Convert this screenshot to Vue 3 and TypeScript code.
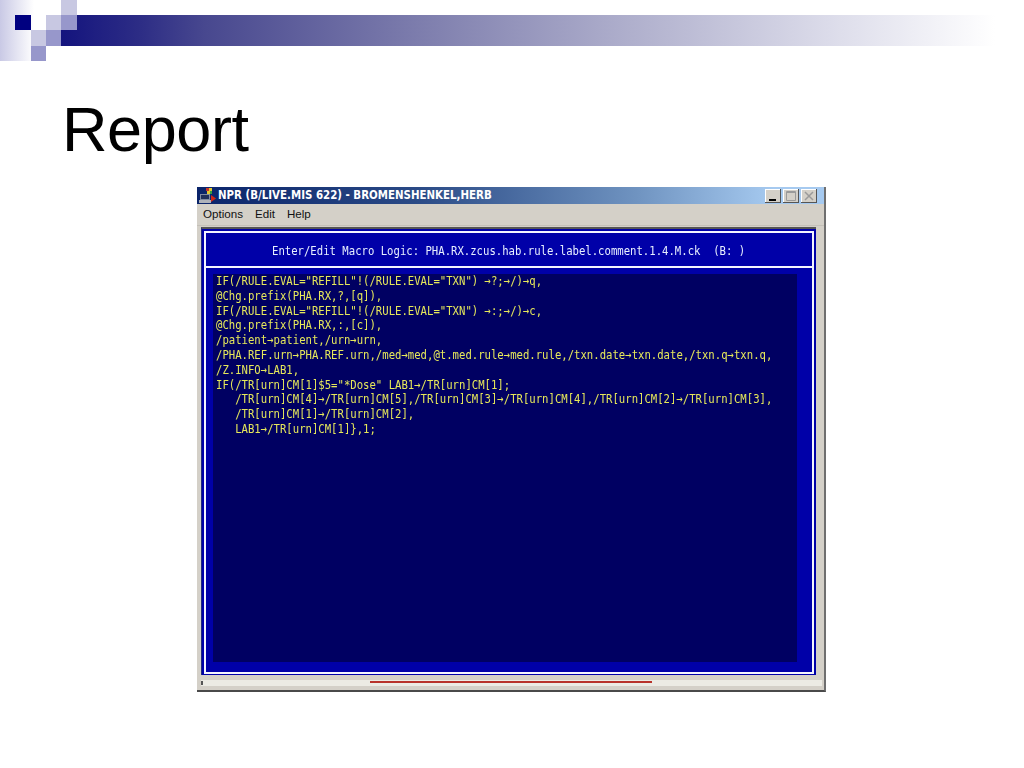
<script setup lang="ts">
const heading = 'Enter/Edit Macro Logic: PHA.RX.zcus.hab.rule.label.comment.1.4.M.ck  (B: )'
const lines: string[] = [
  'IF(/RULE.EVAL="REFILL"!(/RULE.EVAL="TXN") →?;→/)→q,',
  '@Chg.prefix(PHA.RX,?,[q]),',
  'IF(/RULE.EVAL="REFILL"!(/RULE.EVAL="TXN") →:;→/)→c,',
  '@Chg.prefix(PHA.RX,:,[c]),',
  '/patient→patient,/urn→urn,',
  '/PHA.REF.urn→PHA.REF.urn,/med→med,@t.med.rule→med.rule,/txn.date→txn.date,/txn.q→txn.q,',
  '/Z.INFO→LAB1,',
  'IF(/TR[urn]CM[1]$5="*Dose" LAB1→/TR[urn]CM[1];',
  '   /TR[urn]CM[4]→/TR[urn]CM[5],/TR[urn]CM[3]→/TR[urn]CM[4],/TR[urn]CM[2]→/TR[urn]CM[3],',
  '   /TR[urn]CM[1]→/TR[urn]CM[2],',
  '   LAB1→/TR[urn]CM[1]},1;'
]
const menus: string[] = ['Options', 'Edit', 'Help']
</script>

<template>
  <div class="slide">
    <div class="deco">
      <div class="bar"></div>
      <div class="sq dark"></div>
      <div class="sq a"></div>
      <div class="sq b"></div>
      <div class="sq c"></div>
      <div class="sq d"></div>
      <div class="sq e"></div>
      <div class="sq f"></div>
    </div>
    <h1 class="title">Report</h1>
    <div class="window">
      <div class="titlebar">
        <svg class="appicon" width="17" height="16" viewBox="0 0 17 16">
          <rect x="1" y="6" width="10" height="6" fill="#7f8aa0" />
          <rect x="2" y="7" width="8" height="4" fill="#20305a" />
          <rect x="0" y="12" width="12" height="3" fill="#aeb2ba" />
          <rect x="7" y="0" width="3" height="3" fill="#c8352a" />
          <rect x="10" y="0" width="3" height="3" fill="#e0c830" />
          <rect x="8" y="3" width="3" height="3" fill="#e0c830" />
          <rect x="11" y="3" width="2" height="3" fill="#30a040" />
          <path d="M12 7l5 3.5-5 3.5z" fill="#d02818" />
        </svg>
        <span class="wintitle">NPR (B/LIVE.MIS 622) - BROMENSHENKEL,HERB</span>
        <div class="btns">
          <div class="btn"><svg width="16" height="14" viewBox="0 0 16 14"><rect x="4" y="10" width="7" height="2" fill="#000" /></svg></div>
          <div class="btn off"><svg width="16" height="14" viewBox="0 0 16 14"><path d="M3.5 2.5h9v9h-9zM3.5 3.5h9" fill="none" stroke="#9a9a9a" /></svg></div>
          <div class="btn off"><svg width="16" height="14" viewBox="0 0 16 14"><path d="M4 3l8 8M12 3l-8 8" stroke="#9a9a9a" stroke-width="1.5" /></svg></div>
        </div>
      </div>
      <div class="menubar">
        <span v-for="m in menus" :key="m" class="menu">{{ m }}</span>
      </div>
      <div class="terminal">
        <div class="frame">
          <div class="head"><div class="mono headtext">{{ heading }}</div></div>
          <div class="body">
            <div class="code">
              <div v-for="(l, i) in lines" :key="i" class="mono line">{{ l }}</div>
            </div>
          </div>
        </div>
      </div>
      <div class="scroll"><div class="track"></div></div>
    </div>
  </div>
</template>

<style scoped>
.slide {
  width: 1024px;
  height: 768px;
  background: #fff;
  overflow: hidden;
  display: flex;
  flex-direction: column;
}
.deco {
  height: 61px;
  flex: none;
  display: grid;
  grid-template-columns: 15px 16px 15px 15px 16px 1fr;
  grid-template-rows: 15px 15px 16px 15px;
  background: linear-gradient(90deg, #c9c9e5 0, #fff 34px) no-repeat;
}
.bar {
  grid-column: 5 / 7;
  grid-row: 2 / 4;
  background: linear-gradient(90deg, #14147e 0, #2c2c85 8%, #48488f 15%, #7f7fae 38%, #adadcb 58%, #dcdcea 80%, #fff 97%);
}
.sq { z-index: 1; }
.dark { grid-column: 2; grid-row: 2; background: #000080; }
.a { grid-column: 5; grid-row: 1; background: #c8c8e2; }
.b { grid-column: 4; grid-row: 2; background: #c8c8e2; }
.c { grid-column: 5; grid-row: 2; background: #9797cb; }
.d { grid-column: 3; grid-row: 3; background: #c8c8e2; }
.e { grid-column: 4; grid-row: 3; background: #9797cb; }
.f { grid-column: 3; grid-row: 4; background: #9797cb; }
.title {
  margin: 33px 0 0 62px;
  font: 400 63px/70px "Liberation Sans", Arial, sans-serif;
  letter-spacing: -0.4px;
  color: #000;
}
.window {
  margin: 23px 0 0 197px;
  width: 629px;
  height: 505px;
  box-sizing: border-box;
  background: #d4d0c8;
  border-right: 2px solid #6f6f6f;
  border-bottom: 2px solid #4a4a4a;
  display: flex;
  flex-direction: column;
}
.titlebar {
  height: 17px;
  flex: none;
  background: linear-gradient(90deg, #0a246a 0, #2a4a86 35%, #6f93c0 70%, #a6caf0 92%, #a6caf0 100%);
  display: flex;
  align-items: center;
  padding-left: 2px;
}
.appicon { flex: none; }
.wintitle {
  margin-left: 2px;
  font: 700 11.4px/17px "DejaVu Sans", Verdana, sans-serif;
  font-stretch: condensed;
  color: #fff;
  white-space: nowrap;
}
.btns {
  margin-left: auto;
  margin-right: 7px;
  display: flex;
  gap: 2px;
}
.btn {
  width: 16px;
  height: 14px;
  background: #d4d0c8;
  box-shadow: inset -1px -1px 0 #555, inset 1px 1px 0 #fff;
}
.btn svg { display: block; }
.menubar {
  height: 22px;
  flex: none;
  display: flex;
  align-items: center;
  gap: 12px;
  padding: 0 0 2px 6px;
  box-sizing: border-box;
  border-bottom: 1px solid #c4c0b8;
}
.menu {
  font: 400 11.6px/20px "Liberation Sans", Tahoma, sans-serif;
  color: #111;
}
.terminal {
  flex: 1;
  min-height: 0;
  margin: 1px 8px 0 4px;
  background: #0000a8;
  border-top: 2px solid #555;
  border-left: 1px solid #222a80;
  padding: 2px 2px 1px 2px;
  display: flex;
}
.frame {
  flex: 1;
  min-width: 0;
  border: 2px solid #f4f4ff;
  display: flex;
  flex-direction: column;
}
.head {
  flex: none;
  border-bottom: 2px solid #f4f4ff;
  padding: 1px 0 0 66px;
  box-sizing: border-box;
  height: 35px;
  display: flex;
  align-items: center;
}
.body {
  flex: 1;
  min-height: 0;
  padding: 6px 15px 10px 7px;
  display: flex;
}
.code {
  flex: 1;
  background: #000062;
  padding: 0 0 0 3px;
  min-width: 0;
}
.mono {
  font-family: "DejaVu Sans Mono", "Liberation Mono", monospace;
  font-size: 13px;
  white-space: pre;
  transform: scaleX(0.817);
  transform-origin: left center;
  filter: blur(0.25px);
}
.headtext {
  color: #e8f0ff;
  line-height: 15px;
}
.line {
  color: #e6e85a;
  height: 14.8px;
  line-height: 14.8px;
}
.scroll {
  height: 15px;
  flex: none;
  padding: 0 2px 0 4px;
  box-sizing: border-box;
}
.track {
  height: 6px;
  margin-top: 5px;
  background: #ecebe4;
  position: relative;
}
.track::before {
  content: "";
  position: absolute;
  left: 0;
  top: 1px;
  width: 2px;
  height: 4px;
  background: #555;
}
.track::after {
  content: "";
  position: absolute;
  left: 169px;
  width: 282px;
  top: 1px;
  height: 2px;
  background: #b8322a;
}
</style>

<style>
html, body { margin: 0; background: #fff; }
</style>
